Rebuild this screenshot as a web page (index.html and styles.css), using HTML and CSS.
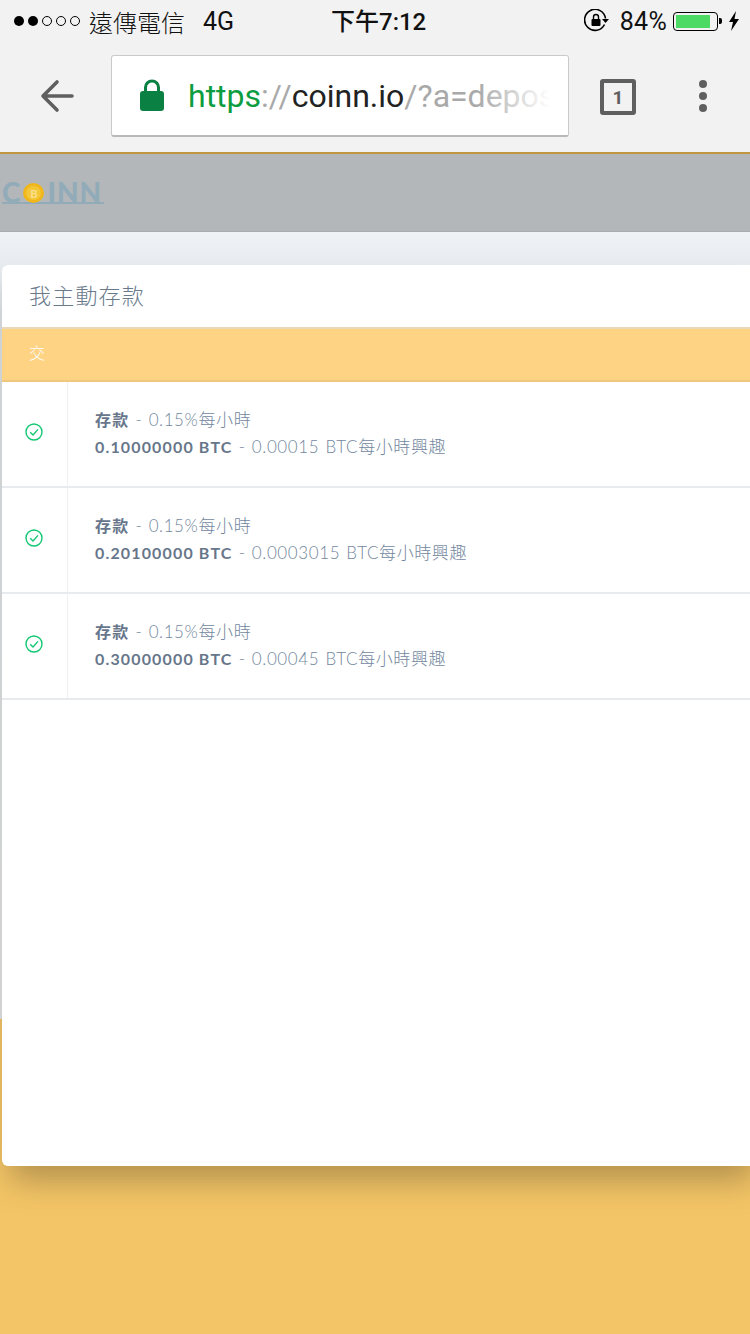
FILE: index.html
```html
<!DOCTYPE html>
<html lang="zh-Hant">
<head>
<meta charset="utf-8">
<title>coinn.io</title>
<link rel="stylesheet" href="styles.css">
</head>
<body>
<div class="chrome">
  <div class="status">
    <div class="status-left">
      <svg class="signal" width="70" height="14" viewBox="0 0 70 14"><circle cx="6" cy="7" r="5" fill="#000"/><circle cx="20" cy="7" r="5" fill="#000"/><circle cx="34" cy="7" r="4.5" fill="none" stroke="#000"/><circle cx="48" cy="7" r="4.5" fill="none" stroke="#000"/><circle cx="62" cy="7" r="4.5" fill="none" stroke="#000"/></svg>
      <span class="carrier">遠傳電信</span>
      <span class="net">4G</span>
    </div>
    <div class="clock">下午7:12</div>
    <div class="status-right">
      <svg width="26" height="24" viewBox="0 0 26 24"><path d="M20.5 15.5A10.5 10.5 0 1 1 21.5 9.5" fill="none" stroke="#000" stroke-width="1.6"/><path d="M18 10h7l-3.500 4z" fill="#000"/><rect x="7.500" y="10" width="9" height="7" rx="1" fill="#000"/><path d="M9.500 10V8a2.500 2.500 0 0 1 5 0v2" fill="none" stroke="#000" stroke-width="1.400"/></svg>
      <span class="pct">84%</span>
      <span class="battery"><span class="level"></span></span>
      <span class="nub"></span>
      <svg width="12" height="20" viewBox="0 0 12 20"><path d="M8 0 1 11h4l-2 9 8-12H6.500z" fill="#000"/></svg>
    </div>
  </div>
  <div class="toolbar">
    <svg class="back" width="36" height="34" viewBox="0 0 36 34"><path d="M18 3 4 17l14 14M4 17h29" fill="none" stroke="#5f5f5f" stroke-width="3.600" stroke-linecap="round" stroke-linejoin="round"/></svg>
    <div class="omnibox">
      <svg class="lock" width="26" height="33" viewBox="0 0 26 33"><path d="M6.500 14V8.500a6.500 6.500 0 0 1 13 0V14" fill="none" stroke="#0b8043" stroke-width="3"/><rect x="1" y="12" width="24" height="20" rx="3" fill="#0b8043"/></svg>
      <div class="url"><span class="scheme">https</span><span class="sep">://</span><span class="host">coinn.io</span><span class="path">/?a=deposit</span></div>
      <div class="fade"></div>
    </div>
    <div class="tabs">1</div>
    <div class="menu"><i></i><i></i><i></i></div>
  </div>
</div>
<div class="page">
  <div class="site-header">
    <div class="logo">C<span class="coin"><b>B</b></span>INN</div>
  </div>
  <div class="page-body"></div>
  <div class="page-foot"></div>
  <section class="card">
    <h2 class="card-title">我主動存款</h2>
    <div class="tab-strip">交</div>
    <div class="row">
      <div class="row-icon"><svg width="18" height="18" viewBox="0 0 18 18"><circle cx="9" cy="9" r="8" fill="none" stroke="#14c773" stroke-width="1.400"/><path d="M5.200 9.300 8 12l5-5.600" fill="none" stroke="#14c773" stroke-width="1.400"/></svg></div>
      <div class="row-text">
        <p><b>存款</b> - 0.15%每小時</p>
        <p><b>0.10000000 BTC</b> - 0.00015 BTC每小時興趣</p>
      </div>
    </div>
    <div class="row">
      <div class="row-icon"><svg width="18" height="18" viewBox="0 0 18 18"><circle cx="9" cy="9" r="8" fill="none" stroke="#14c773" stroke-width="1.400"/><path d="M5.200 9.300 8 12l5-5.600" fill="none" stroke="#14c773" stroke-width="1.400"/></svg></div>
      <div class="row-text">
        <p><b>存款</b> - 0.15%每小時</p>
        <p><b>0.20100000 BTC</b> - 0.0003015 BTC每小時興趣</p>
      </div>
    </div>
    <div class="row">
      <div class="row-icon"><svg width="18" height="18" viewBox="0 0 18 18"><circle cx="9" cy="9" r="8" fill="none" stroke="#14c773" stroke-width="1.400"/><path d="M5.200 9.300 8 12l5-5.600" fill="none" stroke="#14c773" stroke-width="1.400"/></svg></div>
      <div class="row-text">
        <p><b>存款</b> - 0.15%每小時</p>
        <p><b>0.30000000 BTC</b> - 0.00045 BTC每小時興趣</p>
      </div>
    </div>
  </section>
</div>
</body>
</html>
```
FILE: styles.css
```css
* { box-sizing: border-box; }
html, body { margin: 0; padding: 0; }
body {
  width: 750px;
  height: 1334px;
  overflow: hidden;
  background: #f4c566;
  font-family: "Lato", "Noto Sans CJK TC", sans-serif;
}
.chrome {
  height: 154px;
  background: #f2f2f2;
  border-bottom: 2px solid #c1963f;
  display: flex;
  flex-direction: column;
}
.status {
  height: 40px;
  display: flex;
  align-items: center;
  justify-content: space-between;
  position: relative;
  padding: 2px 10px 0 13px;
  font-family: "Roboto", "Noto Sans CJK TC", sans-serif;
  color: #111;
  font-size: 24px;
}
.status-left { display: flex; align-items: center; }
.signal { margin-right: 6px; }
.carrier { font-size: 24px; width: 95px; font-weight: 300; white-space: nowrap; }
.net { margin-left: 19px; font-size: 25px; line-height: 1; }
.clock {
  position: absolute;
  left: 331px;
  top: 2px;
  font-size: 24px;
  font-weight: 500;
}
.status-right { display: flex; align-items: center; }
.pct { margin-left: 10px; font-size: 25px; letter-spacing: .3px; }
.battery {
  width: 45px;
  height: 19px;
  margin-left: 6px;
  border: 1px solid #000;
  border-radius: 4px;
  padding: 2px;
  display: flex;
}
.level { width: 34px; background: #4cd964; }
.nub { width: 3px; height: 6px; background: #000; margin-right: 6px; margin-left: 1px; border-radius: 0 2px 2px 0; }
.toolbar {
  flex: 1;
  display: flex;
  align-items: flex-start;
  padding-top: 15px;
  position: relative;
}
.back { margin: 24px 0 0 39px; }
.omnibox {
  width: 458px;
  height: 82px;
  margin-left: 36px;
  background: #fff;
  border: 1px solid #c9c9c9;
  border-bottom: 2px solid #b9b9b9;
  border-radius: 3px;
  display: flex;
  align-items: center;
  padding-left: 27px;
  position: relative;
  overflow: hidden;
}
.lock { flex: none; }
.url {
  margin-left: 23px;
  font-family: "Roboto", sans-serif;
  font-size: 32px;
  white-space: nowrap;
}
.scheme { color: #0b9d3f; }
.sep { color: #a9a9a9; }
.host { color: #222; }
.path { color: #a9a9a9; }
.fade {
  position: absolute;
  right: 0;
  top: 0;
  bottom: 0;
  width: 90px;
  background: linear-gradient(to right, rgba(255,255,255,0), #fff 80%);
}
.tabs {
  width: 36px;
  height: 36px;
  margin: 24px 0 0 31px;
  border: 4px solid #5f5f5f;
  border-radius: 3px;
  color: #5f5f5f;
  font-family: "Roboto", sans-serif;
  font-weight: 700;
  font-size: 19px;
  display: flex;
  align-items: center;
  justify-content: center;
}
.menu {
  margin: 25px 0 0 63px;
  display: flex;
  flex-direction: column;
  gap: 4px;
}
.menu i { display: block; width: 8px; height: 8px; border-radius: 50%; background: #5f5f5f; }
.page { position: relative; height: 1180px; }
.site-header {
  height: 78px;
  background: #b3b7ba;
  border-bottom: 1px solid #a9adb0;
  padding: 25px 0 0 2px;
}
.logo {
  width: 102px;
  height: 25px;
  display: flex;
  align-items: flex-start;
  font-family: "Lato", sans-serif;
  font-weight: 900;
  font-size: 28px;
  line-height: 26px;
  letter-spacing: 1px;
  color: #92abb9;
  border-bottom: 2px solid #92abb9;
}
.coin {
  width: 21px;
  height: 20px;
  border-radius: 50%;
  background: #f4c63a;
  border: 3px solid #f1b71a;
  margin: 4px 3px 0 2px;
  display: flex;
  align-items: center;
  justify-content: center;
  letter-spacing: 0;
}
.coin b { font-size: 11px; line-height: 1; color: #fbe08a; }
.page-body {
  height: 787px;
  background: linear-gradient(to bottom, #eff3f6, #e0e5e9 60px, #e0e4e8);
}
.page-foot { height: 315px; background: #f4c566; }
.card {
  position: absolute;
  left: 2px;
  top: 111px;
  width: 760px;
  height: 901px;
  background: #fff;
  border-radius: 6px;
  box-shadow: 0 22px 30px -8px rgba(70, 60, 40, .38);
}
.card-title {
  height: 62px;
  margin: 0;
  padding-left: 27px;
  font-size: 22px;
  line-height: 62px;
  font-weight: 300;
  color: #6a7a8b;
  letter-spacing: 1.2px;
}
.tab-strip {
  height: 55px;
  background: #fed384;
  border-top: 2px solid #ead9b8;
  border-bottom: 2px solid #efc77e;
  padding-left: 27px;
  color: #fff;
  font-size: 16px;
  font-weight: 300;
  line-height: 47px;
}
.row {
  height: 106px;
  display: flex;
  border-bottom: 2px solid #e8ebed;
}
.row-icon {
  width: 66px;
  border-right: 1px solid #eef0f2;
  display: flex;
  align-items: center;
  justify-content: center;
  padding-right: 1px;
  padding-bottom: 4px;
}
.row-text { padding: 24px 0 0 27px; }
.row-text p {
  margin: 0;
  font-size: 17px;
  line-height: 27px;
  font-weight: 300;
  color: #73879e;
  letter-spacing: .6px;
  word-spacing: 1px;
  white-space: nowrap;
}
.row-text b { font-size: 16px; font-weight: 700; color: #67768a; letter-spacing: 1.15px; word-spacing: 0; }
```
